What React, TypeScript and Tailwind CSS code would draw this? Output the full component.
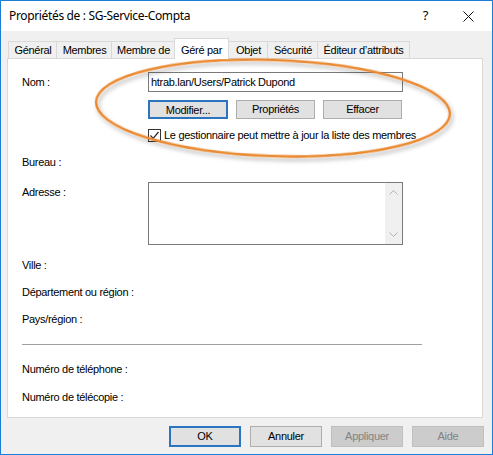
import React from 'react';

const tabs = [
  { label: 'Général', width: 'w-[49px]' },
  { label: 'Membres', width: 'w-[56px]' },
  { label: 'Membre de', width: 'w-[64px]' },
  { label: 'Géré par', width: 'w-[55px]', active: true },
  { label: 'Objet', width: 'w-[40px]' },
  { label: 'Sécurité', width: 'w-[51px]' },
  { label: 'Éditeur d’attributs', width: 'w-[93px]', last: true },
];

const uiFont = "font-['Liberation_Sans',Arial,sans-serif] text-[11px] tracking-[-0.3px]";

// ligne simple : libellé seul
const FieldRow: React.FC<{ label: string; className: string }> = ({ label, className }) => (
  <div className={`flex h-[16px] items-center ${className}`}>
    <span>{label}</span>
  </div>
);

const App: React.FC = () => {
  return (
    <div className={`relative flex h-[455px] w-[493px] flex-col border border-[#1b7dd6] bg-[#f0f0f0] text-black ${uiFont}`}>
      {/* barre de titre */}
      <div className="flex h-[30px] items-center bg-white pl-[8px]">
        <span className="font-['Noto_Sans',sans-serif] text-[12px] tracking-[-0.35px]">Propriétés de : SG-Service-Compta</span>
        <span className="ml-auto mr-[35px] font-['Noto_Sans',sans-serif] text-[13px]">?</span>
        <svg width="11" height="11" viewBox="0 0 11 11" className="mr-[18px]">
          <path d="M0.5 0.5 L10.5 10.5 M10.5 0.5 L0.5 10.5" stroke="#111" strokeWidth="1" fill="none" />
        </svg>
      </div>

      {/* onglets */}
      <div className="mt-[7px] flex h-[20px] items-end pl-[8px]">
        {tabs.map((t) => (
          <div
            key={t.label}
            className={
              t.active
                ? `relative z-10 -mb-px -ml-px flex h-[21px] ${t.width} items-start justify-center border border-b-0 border-[#d9d9d9] bg-white pt-[3px]`
                : `-ml-px flex h-[17px] ${t.width} items-center justify-center border-l border-t border-[#d9d9d9] ${t.last ? 'border-r' : ''}`
            }
          >
            {t.label}
          </div>
        ))}
      </div>

      {/* panneau Géré par */}
      <div className="ml-[6px] flex h-[360px] w-[476px] flex-col border border-[#d9d9d9] bg-white pl-[14px]">
        <div className="mt-[13px] flex h-[20px] items-center">
          <span className="w-[126px]">Nom :</span>
          <div className="flex h-[20px] w-[255px] items-center border border-[#7a7a7a] pl-[2px]">
            htrab.lan/Users/Patrick Dupond
          </div>
        </div>

        <div className="ml-[126px] mt-[8px] flex h-[19px] gap-[8px]">
          <button className="w-[80px] border-2 border-[#2a74c0] bg-[#e1e1e1]">Modifier...</button>
          <button className="w-[79px] border border-[#adadad] bg-[#e1e1e1]">Propriétés</button>
          <button className="w-[79px] border border-[#adadad] bg-[#e1e1e1]">Effacer</button>
        </div>

        <div className="ml-[126px] mt-[9px] flex h-[15px] items-center gap-[3px]">
          <div className="flex h-[13px] w-[13px] items-center justify-center border border-[#333] bg-white">
            <svg width="11" height="11" viewBox="0 0 11 11">
              <path d="M1.5 5.5 L4.2 8.3 L9.5 2" stroke="#222" strokeWidth="1.2" fill="none" />
            </svg>
          </div>
          <span>Le gestionnaire peut mettre à jour la liste des membres</span>
        </div>

        <FieldRow label="Bureau :" className="mt-[11px]" />

        <div className="mt-[12px] flex h-[63px]">
          <span className="w-[126px] pt-[2px] leading-[16px]">Adresse :</span>
          <div className="flex w-[255px] border border-[#7a7a7a] bg-white">
            <div className="flex-1" />
            <div className="flex w-[17px] flex-col items-center justify-between bg-[#f0f0f0] py-[7px]">
              <svg width="9" height="5" viewBox="0 0 9 5">
                <path d="M0.5 4.5 L4.5 0.5 L8.5 4.5" stroke="#b5b5b5" strokeWidth="1" fill="none" />
              </svg>
              <svg width="9" height="5" viewBox="0 0 9 5">
                <path d="M0.5 0.5 L4.5 4.5 L8.5 0.5" stroke="#b5b5b5" strokeWidth="1" fill="none" />
              </svg>
            </div>
          </div>
        </div>

        <FieldRow label="Ville :" className="mt-[12px]" />
        <FieldRow label="Département ou région :" className="mt-[11px]" />
        <FieldRow label="Pays/région :" className="mt-[11px]" />

        <div className="mt-[17px] h-px w-[400px] bg-[#a0a0a0]" />

        <FieldRow label="Numéro de téléphone :" className="mt-[16px]" />
        <FieldRow label="Numéro de télécopie :" className="mt-[12px]" />
      </div>

      {/* boutons du bas */}
      <div className="ml-[168px] mt-[8px] flex h-[21px] gap-[9px]">
        <button className="w-[72px] border-2 border-[#2a74c0] bg-[#e1e1e1]">OK</button>
        <button className="w-[72px] border border-[#adadad] bg-[#e1e1e1]">Annuler</button>
        <button className="w-[72px] border border-[#bfbfbf] bg-[#cccccc] text-[#838383]">Appliquer</button>
        <button className="w-[72px] border border-[#bfbfbf] bg-[#cccccc] text-[#838383]">Aide</button>
      </div>

      {/* annotation : ellipse orange autour du gestionnaire */}
      <svg className="pointer-events-none absolute left-[-1px] top-[-1px]" width="493" height="455" viewBox="0 0 493 455">
        <defs>
          <filter id="ombre" x="-10%" y="-20%" width="120%" height="150%">
            <feDropShadow dx="2" dy="3" stdDeviation="2" floodColor="#000" floodOpacity="0.3" />
          </filter>
        </defs>
        <ellipse
          cx="273"
          cy="108"
          rx="177"
          ry="48"
          transform="rotate(2 273 108)"
          fill="none"
          stroke="#ea8a33"
          strokeWidth="2.5"
          filter="url(#ombre)"
        />
      </svg>
    </div>
  );
};

export default App;
